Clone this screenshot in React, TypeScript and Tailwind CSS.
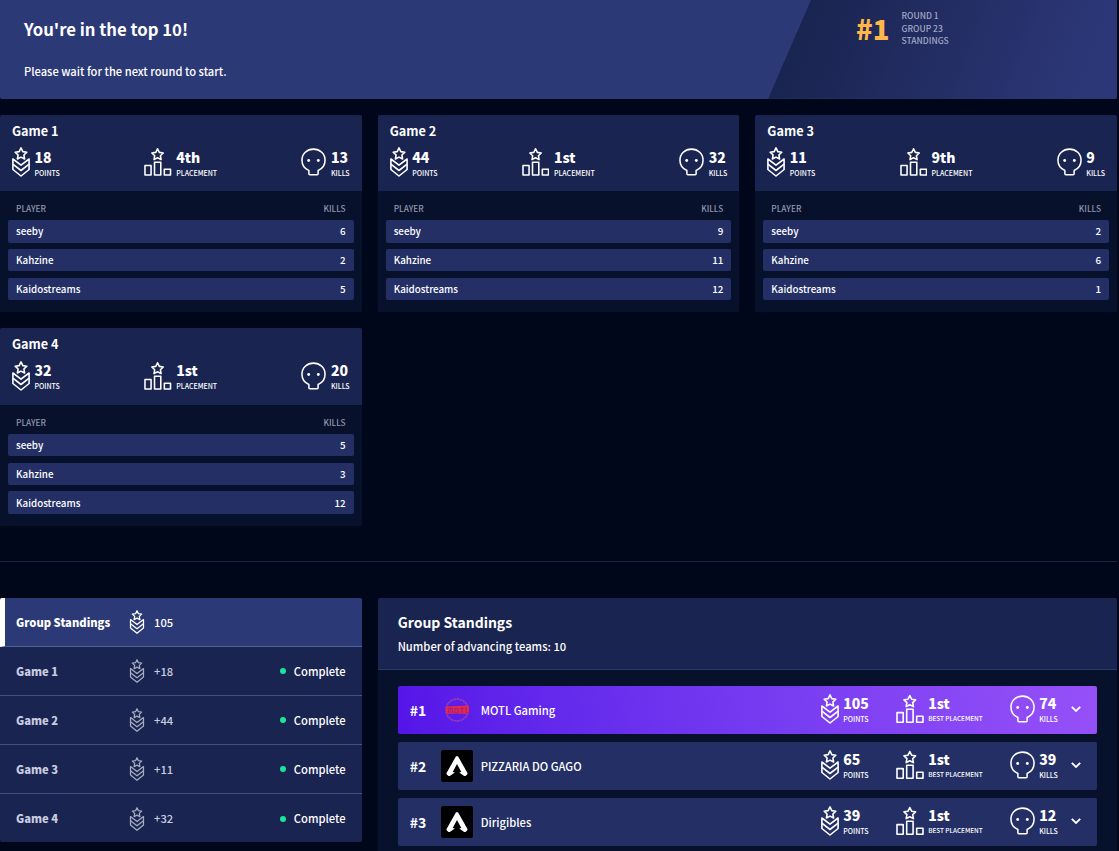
import type { ReactNode } from "react";

type IconProps = { className?: string };

const star = "M9 .9l1.800 3.700 4 .6-2.900 2.800.7 4L9 10.100 5.400 12l.7-4-2.900-2.800 4-.6z";

const PointsIcon = ({ className }: IconProps) => (
  <svg viewBox="0 0 18 30" fill="none" stroke="currentColor" strokeWidth="1.6" strokeLinejoin="round" className={className}>
    <path d={star} />
    <path d="M.9 12v10.500L9 29l8.100-6.500V12L9 18.200z" />
    <path d="M.9 17.200L9 23.500l8.100-6.300" />
  </svg>
);

const PlacementIcon = ({ className }: IconProps) => (
  <svg viewBox="0 0 28 30" fill="none" stroke="currentColor" strokeWidth="1.6" strokeLinejoin="round" className={className}>
    <path d={star} transform="translate(4.800 .6)" />
    <path d="M1 18.600h6.200v9.600H1zM10.700 15.300h6.400v12.900h-6.400zM20.700 22.300h6.300v5.900h-6.300z" />
  </svg>
);

const KillsIcon = ({ className }: IconProps) => (
  <svg viewBox="0 0 26 30" fill="none" stroke="currentColor" strokeWidth="1.6" strokeLinejoin="round" className={className}>
    <path d="M8.200 27.200v-3.400C3.800 22 1 18 1 13.200 1 6.500 6.200 1.600 13 1.600s12 4.900 12 11.600c0 4.800-2.800 8.800-7.200 10.600v3.400q0 1-1 1H9.200q-1 0-1-1z" />
    <circle cx="8" cy="13.500" r="1.500" fill="currentColor" stroke="none" />
    <circle cx="18" cy="13.500" r="1.500" fill="currentColor" stroke="none" />
  </svg>
);

const ApexLogo = () => (
  <svg viewBox="0 0 32 32" className="size-8 rounded-xs bg-black">
    <path
      d="M15 6.300h2l9.600 16.900c-.4 1.700-1.700 2.800-3.400 2.900l-5-3.500 2.100-.7L16 14l-4.300 7.900 2.100.7-5 3.500c-1.700-.1-3-1.200-3.400-2.900z"
      fill="#fff"
    />
  </svg>
);

const MotlLogo = () => (
  <svg viewBox="0 0 32 32" className="size-8">
    <circle cx="16" cy="16" r="11" fill="none" stroke="#8f3cba" strokeWidth="1.800" strokeDasharray="2.500 .5" />
    <path d="M5 12.500l23-1v8.300H5z" fill="#e42a4c" />
    <path
      d="M7.500 19v-4.500h4.200V19M9.600 14.500V19M14 14.500h3V19h-3zM19 14.500h4M21 14.500V19M25 13v5.500h2.500"
      fill="none"
      stroke="#8a2090"
      strokeWidth=".8"
    />
  </svg>
);

type StatProps = { icon: ReactNode; value: string; label: string; small?: boolean };

const Stat = ({ icon, value, label, small }: StatProps) => (
  <div className="flex items-center gap-[4.500px]">
    {icon}
    <div className="flex flex-col pt-[3px] whitespace-nowrap">
      <span className="text-[14px] leading-[18px] font-black">{value}</span>
      <span className={small ? "text-[6.400px] leading-[14px] font-medium" : "text-[7px] leading-[14px] font-medium"}>
        {label}
      </span>
    </div>
  </div>
);

const games = [
  { name: "Game 1", points: "18", place: "4th", total: "13", kills: [6, 2, 5] },
  { name: "Game 2", points: "44", place: "1st", total: "32", kills: [9, 11, 12] },
  { name: "Game 3", points: "11", place: "9th", total: "9", kills: [2, 6, 1] },
  { name: "Game 4", points: "32", place: "1st", total: "20", kills: [5, 3, 12] },
];

const players = ["seeby", "Kahzine", "Kaidostreams"];

const teams = [
  { rank: "#1", name: "MOTL Gaming", points: "105", kills: "74" },
  { rank: "#2", name: "PIZZARIA DO GAGO", points: "65", kills: "39" },
  { rank: "#3", name: "Dirigibles", points: "39", kills: "12" },
];

const Banner = () => (
  <div className="flex h-[98.700px] justify-between overflow-hidden rounded-b-xs bg-[#2c3977]">
    <div className="flex flex-col pt-4 pl-6">
      <h1 className="text-[16.700px] leading-[26px] font-bold">You're in the top 10!</h1>
      <p className="mt-[19px] text-[11.150px] leading-5 font-medium">Please wait for the next round to start.</p>
    </div>
    <div className="flex w-[349px] gap-3 bg-linear-110 from-[#1a2450] from-10% to-[#2c3778] to-90% pl-[88px] [clip-path:polygon(43px_0,100%_0,100%_100%,0_100%)]">
      <span className="mt-[10px] text-[27.500px] leading-9 font-black text-[#ffb74a]">#1</span>
      <div className="mt-[9px] flex flex-col text-[8.500px] leading-[12.500px] font-medium text-[#a3a9c6]">
        <span>ROUND 1</span>
        <span>GROUP 23</span>
        <span>STANDINGS</span>
      </div>
    </div>
  </div>
);

const GameCard = ({ game }: { game: (typeof games)[number] }) => (
  <div className="h-[197.500px] overflow-hidden rounded-t-xs bg-[#08112c]">
    <div className="h-[76.400px] bg-[#1a2450] px-3 pt-1.5">
      <h2 className="text-[12.700px] leading-5 font-bold">{game.name}</h2>
      <div className="mt-1 flex justify-between">
        <Stat icon={<PointsIcon className="h-[30px] w-[18px]" />} value={game.points} label="POINTS" />
        <Stat icon={<PlacementIcon className="h-[30px] w-[27.500px]" />} value={game.place} label="PLACEMENT" />
        <Stat icon={<KillsIcon className="h-[30px] w-[25px]" />} value={game.total} label="KILLS" />
      </div>
    </div>
    <div className="flex flex-col gap-[6.400px] px-2 pt-[9.300px]">
      <div className="-mb-[2.500px] flex justify-between px-2 text-[8.300px] leading-4 font-medium text-[#9096ab]">
        <span>PLAYER</span>
        <span>KILLS</span>
      </div>
      {players.map((player, i) => (
        <div key={player} className="flex h-[22.400px] items-center justify-between rounded-xs bg-[#242f66] px-2 text-[9.800px] leading-4 font-medium">
          <span>{player}</span>
          <span>{game.kills[i]}</span>
        </div>
      ))}
    </div>
  </div>
);

const Sidebar = () => (
  <div className="h-[244px] overflow-hidden rounded-xs bg-[#1a2450] text-[11.200px] font-medium">
    <div className="flex h-[49px] items-center border-b border-b-[#525f9a] border-l-[5px] border-l-white bg-[#2c3977] pl-[11px]">
      <span className="w-[113px] font-black">Group Standings</span>
      <PointsIcon className="h-6 w-4" />
      <span className="ml-[9px]">105</span>
    </div>
    {games.map((game) => (
      <div key={game.name} className="flex h-[49px] items-center border-b border-[#45507f] px-4 text-[#c9cce0] last:border-0">
        <span className="w-[113px] font-black">{game.name}</span>
        <PointsIcon className="h-6 w-4 opacity-80" />
        <span className="ml-[9px]">+{game.points}</span>
        <span className="ml-auto flex items-center gap-2 text-white">
          <i className="size-1.5 rounded-full bg-[#17e69b]" />
          Complete
        </span>
      </div>
    ))}
  </div>
);

const Standings = () => (
  <div className="col-span-2 h-[300px] overflow-hidden rounded-xs bg-[#08112c]">
    <div className="h-[72px] border-b border-[#2c3768] bg-[#1a2450] px-5 pt-3.5">
      <h2 className="text-[14px] leading-5 font-bold">Group Standings</h2>
      <p className="mt-1 text-[11.200px] leading-5 font-medium">Number of advancing teams: 10</p>
    </div>
    <div className="flex flex-col gap-2 px-5 pt-4">
      {teams.map((team, i) => (
        <div
          key={team.rank}
          className={
            i === 0
              ? "flex h-12 items-center rounded-xs bg-linear-80 from-[#5614e8] to-[#9650f8] pl-3"
              : "flex h-12 items-center rounded-xs bg-[#242f66] pl-3"
          }
        >
          <span className="w-[31px] text-[14px] font-bold">{team.rank}</span>
          {i === 0 ? <MotlLogo /> : <ApexLogo />}
          <span className="ml-2 w-[340px] text-[11.200px] font-medium">{team.name}</span>
          <div className="flex items-center pb-[2.500px]">
            <div className="w-[75px]">
              <Stat icon={<PointsIcon className="h-[30px] w-[18px]" />} value={team.points} label="POINTS" />
            </div>
            <div className="w-[114px]">
              <Stat icon={<PlacementIcon className="h-[30px] w-[28px]" />} value="1st" label="BEST PLACEMENT" small />
            </div>
            <div className="w-[61px]">
              <Stat icon={<KillsIcon className="h-[30px] w-[25px]" />} value={team.kills} label="KILLS" />
            </div>
            <svg viewBox="0 0 10 6" fill="none" stroke="currentColor" strokeWidth="1.800" className="h-1.5 w-2.5">
              <path d="M.8.8L5 5 9.200.8" />
            </svg>
          </div>
        </div>
      ))}
    </div>
  </div>
);

const App = () => {
  return (
    <div className="h-[851px] overflow-hidden bg-[#00071a] font-['Noto_Sans_CJK_SC',sans-serif] text-white">
      <div className="w-[1117px]">
        <Banner />
        <div className="mt-4 grid grid-cols-3 gap-4">
          {games.map((game) => (
            <GameCard key={game.name} game={game} />
          ))}
        </div>
        <hr className="mt-[35.500px] border-[#1a2340]" />
        <div className="mt-9 grid grid-cols-3 items-start gap-4">
          <Sidebar />
          <Standings />
        </div>
      </div>
    </div>
  );
};

export default App;
